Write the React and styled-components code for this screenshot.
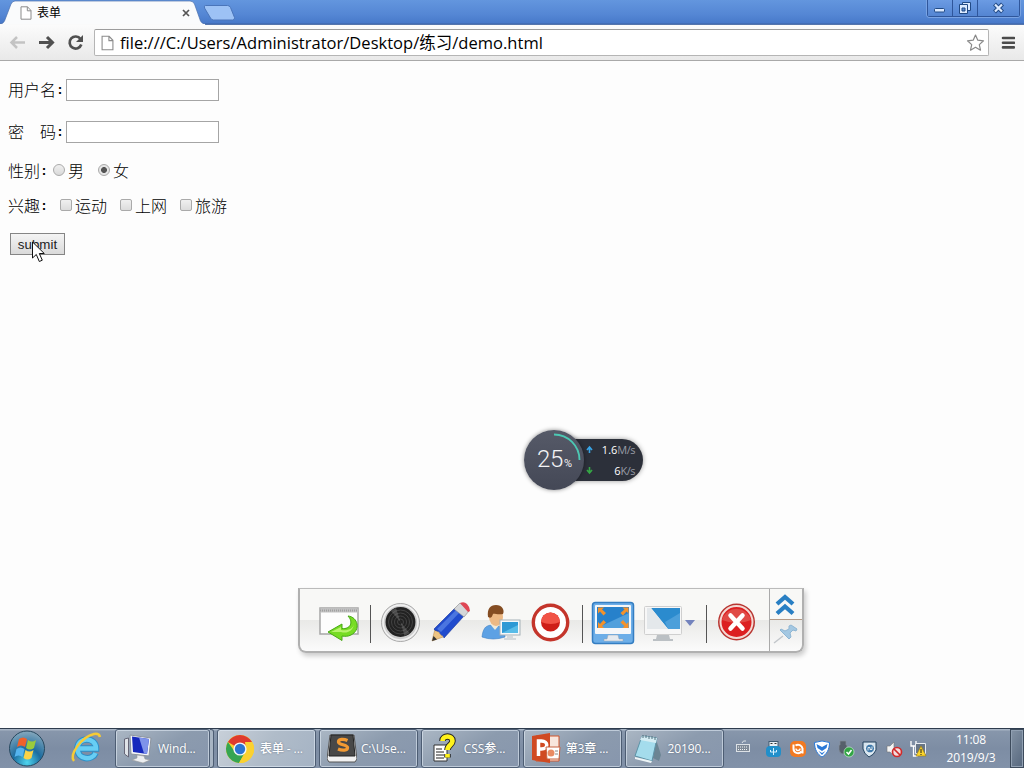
import React from "react";
import styled, { createGlobalStyle } from "styled-components";

const Global = createGlobalStyle`
  html, body { margin: 0; padding: 0; overflow: hidden; background: #fdfdfd; }
  * { box-sizing: border-box; }
`;

const ui = `"Open Sans", "Noto Sans CJK SC", sans-serif`;

const Desktop = styled.div`
  position: relative;
  width: 1024px;
  height: 768px;
  display: flex;
  flex-direction: column;
  overflow: hidden;
  background: #fdfdfd;
  font-family: ${ui};
  color: #000;
`;

/* drawing whose view box starts at (x, y) */
const Svg = styled.svg`
  display: block;
  flex: none;
  margin-left: ${(p) => p.$ml || 0}px;
`;
const Art = ({ x, y, w, h, ml, children }) => (
  <Svg $ml={ml} width={w} height={h} viewBox={`${x} ${y} ${w} ${h}`} fill="none">
    {children}
  </Svg>
);

/* ---------- browser frame ---------- */
const TitleBar = styled.header`
  height: 25px;
  flex: none;
  display: flex;
  background: linear-gradient(#6396de, #5486d4 60%, #4879c9 23px, #3c62a4 24px, #6d87b4 25px);
`;
const Tab = styled.div`
  position: relative;
  width: 206px;
  height: 25px;
  display: flex;
  align-items: center;
  padding-left: 20px;
`;
const TabShape = styled.svg`
  position: absolute;
  left: 0;
  top: 0;
`;
const TabTitle = styled.span`
  position: relative;
  width: 141px;
  margin-left: 5px;
  font-size: 12px;
  line-height: 24px;
`;
const Over = styled.span`
  position: relative;
  display: flex;
`;
const WindowButtons = styled.div`
  display: flex;
  width: 93px;
  height: 17px;
  margin-left: auto;
  margin-right: 4px;
  border: 1px solid #2f569b;
  border-top: 0;
  border-radius: 0 0 3px 3px;
  box-shadow: 0 0 0 1px #79a3e3;
`;
const WinBtn = styled.div`
  width: ${(p) => p.$w}px;
  display: flex;
  justify-content: center;
  background: linear-gradient(#6b9be3, #5485d2);
  & + & { border-left: 1px solid #2f569b; }
`;
const NavBar = styled.nav`
  height: 36px;
  flex: none;
  display: flex;
  align-items: center;
  padding-left: 8px;
  background: linear-gradient(#fbfbfb, #e9e9e9);
  border-bottom: 1px solid #a9a9a9;
`;
const Address = styled.div`
  width: 895px;
  height: 27px;
  margin-left: 9px;
  display: flex;
  align-items: center;
  padding-left: 6px;
  background: #fff;
  border: 1px solid #b5b5b5;
  border-top-color: #9c9c9c;
  border-radius: 2px;
`;
const Url = styled.span`
  width: 846px;
  margin-left: 6px;
  padding-bottom: 1px;
  font-size: 16.5px;
  letter-spacing: 0.02px;
  white-space: nowrap;
  line-height: 23px;
`;

/* ---------- form page ---------- */
const Page = styled.main`
  flex: 1;
  padding: 18px 8px 0;
  font-family: "Noto Sans CJK SC", sans-serif;
  font-size: 16px;
  font-weight: 300;
  line-height: 20px;
`;
const Row = styled.div`
  display: flex;
  align-items: center;
  height: 22px;
  margin-bottom: ${(p) => p.$gap}px;
  white-space: nowrap;
`;
const Label = styled.span`
  height: 22px;
`;
const Colon = styled.span`
  width: ${(p) => p.$w || 8}px;
  font: 700 13.33px "Liberation Mono", monospace;
`;
const Input = styled.input`
  width: 153px;
  height: 22px;
  margin: 0 0 0 2px;
  padding: 1px 3px;
  border: 1px solid #a5a5a5;
  border-radius: 0;
  background: #fff;
  outline: none;
`;
const Choice = styled.label`
  display: flex;
  align-items: center;
  width: ${(p) => p.$w}px;
`;
const Box = styled.i`
  width: 12px;
  height: 12px;
  margin: -2px 3px 0 0;
  border: 1px solid #aaa;
  border-radius: 2px;
  background: linear-gradient(#f0f0f0, #dcdcdc);
`;
const Radio = styled(Box)`
  border-radius: 50%;
  background: ${(p) =>
    p.$on ? "radial-gradient(circle, #555 0 2.6px, #e6e6e6 3.3px)" : "linear-gradient(#f0f0f0, #d9d9d9)"};
`;
const Submit = styled.button`
  display: block;
  width: 55px;
  height: 22px;
  margin: 0 0 0 2px;
  padding: 0;
  border: 1px solid #858585;
  border-radius: 0;
  background: linear-gradient(#f4f4f4, #dadada);
  font: 13.33px "Liberation Sans", sans-serif;
  color: #222;
`;
const Pointer = styled.div`
  position: absolute;
  left: 31px;
  top: 241px;
`;

/* ---------- network monitor ---------- */
const Monitor = styled.div`
  position: absolute;
  left: 524px;
  top: 430px;
  display: flex;
  align-items: center;
  height: 60px;
`;
const Dial = styled.div`
  position: relative;
  z-index: 1;
  width: 60px;
  height: 60px;
  border-radius: 50%;
  background: linear-gradient(#565a68, #444856);
  box-shadow: 0 0 4px rgba(0, 0, 0, 0.45);
  color: #f4f4f6;
  display: flex;
  justify-content: center;
  align-items: baseline;
  line-height: 59px;
  padding-left: 1px;
`;
const DialValue = styled.span`
  font: 300 24px/59px Roboto, sans-serif;
  letter-spacing: -0.4px;
`;
const DialUnit = styled.span`
  margin-left: 1px;
  font: 400 11px Roboto, sans-serif;
`;
const DialArc = styled.svg`
  position: absolute;
  left: 0;
  top: 0;
`;
const Speeds = styled.div`
  width: 79px;
  height: 42px;
  margin-left: -20px;
  padding: 0 8px 0 22px;
  border-radius: 0 21px 21px 0;
  background: #2c303a;
  box-shadow: 0 0 5px rgba(0, 0, 0, 0.4);
`;
const Speed = styled.div`
  display: flex;
  align-items: center;
  height: 21px;
  font-size: 11px;
  color: #fff;
`;
const Amount = styled.span`
  margin-left: auto;
`;
const Unit = styled.span`
  color: #989ca6;
  letter-spacing: -0.5px;
`;

/* ---------- recorder bar ---------- */
const Recorder = styled.div`
  position: absolute;
  left: 298px;
  top: 588px;
  width: 506px;
  height: 65px;
  display: flex;
  border: 2px solid #b0b0b0;
  border-top: 1px solid #bbb;
  border-radius: 0 0 8px 8px;
  background: linear-gradient(#f8f8f6 0 31px, #e9e9e7 31px, #fbfbfb 100%);
  box-shadow: 2px 3px 5px rgba(0, 0, 0, 0.2);
`;
const Tools = styled.div`
  flex: 1;
  display: flex;
  padding: 12px 0 0 18px;
`;
const Separator = styled.i`
  width: 1px;
  height: 38px;
  margin: 4px 0 0 ${(p) => p.$ml}px;
  background: #555;
`;
const Side = styled.div`
  width: 33px;
  border-left: 1px solid #aaa;
`;
const SideBtn = styled.div`
  height: 30px;
  display: flex;
  justify-content: center;
  & + & { border-top: 1px solid #b49a86; }
`;

/* ---------- taskbar ---------- */
const Taskbar = styled.footer`
  height: 40px;
  flex: none;
  display: flex;
  align-items: stretch;
  border-top: 1px solid #2e3c4e;
  background: linear-gradient(#a7b4c4 0 1px, #8796ab 2px, #7d8da4 50%, #8292a9);
  color: #fff;
`;
const TaskButton = styled.div`
  position: relative;
  width: ${(p) => p.$w || 99}px;
  margin: 0 ${(p) => p.$mr ?? 2.9}px 0 0;
  padding-left: 7px;
  display: flex;
  align-items: center;
  border: 1px solid #4d5d73;
  border-radius: 3px;
  box-shadow: inset 0 0 0 1px rgba(225, 235, 245, 0.6);
  background: ${(p) =>
    p.$active ? "linear-gradient(120deg, #c8d0d9, #b0bcc9 50%, #a5b3c4)" : "linear-gradient(150deg, #abb7c4, #8c9bae 50%, #8796ad)"};
`;
const StackEdge = styled.i`
  width: 4px;
  margin-right: 3px;
  border: 1px solid #4d5d73;
  border-left: 0;
  border-radius: 0 3px 3px 0;
  background: #a8b5c4;
`;
const TaskLabel = styled.span`
  margin-left: ${(p) => p.$ml || 4}px;
  padding-bottom: 1px;
  font-size: 12px;
  font-weight: 500;
  letter-spacing: -0.1px;
  white-space: nowrap;
  text-shadow: 0 0 2px rgba(40, 55, 80, 0.5);
`;
const Tray = styled.div`
  display: flex;
  align-items: center;
  margin-left: auto;
`;
const Clock = styled.div`
  width: 76px;
  margin-left: 4px;
  padding-right: 2px;
  font-size: 12px;
  line-height: 18px;
  text-align: center;
  letter-spacing: -0.1px;
`;
const ShowDesktop = styled.i`
  align-self: stretch;
  width: 14px;
  border: 1px solid #3d4b5c;
  box-shadow: inset 0 0 0 1px #91a0b2;
  background: linear-gradient(120deg, #8493a5, #56677d);
`;

const PageIcon = ({ w, h }) => (
  <svg width={w} height={h} viewBox="0 0 12 14" fill="none">
    <path d="M1 .8h6.5L11 4.500v8.700H1zM7.300.8v4H11" fill="#fff" stroke="#8b8b8b" />
  </svg>
);

const tasks = [
  { label: "Wind...", w: 95, mr: 0, stack: true, ml: 5, icon: (
    <Art x={123} y={732} w={30} h={32}>
      <path d="M124.500 738l4-1v19l-4-3z" fill="#dfe3e8" stroke="#667" />
      <path d="M130 734l21 3-2 18-18-2z" fill="#f3f5f7" stroke="#8c949f" />
      <path d="M132 735.500l17 2.500-2 15-14-2z" fill="#1528bd" />
      <path d="M139 736.500l10 1.500-2 15-3-.5z" fill="#7e93ea" />
      <path d="M137 754l7 1 1 3 5 1-7 3-11-3 5-2z" fill="#eceef0" stroke="#999" strokeWidth=".6" />
    </Art>) },
  { label: "表单 - ...", active: true, ml: 5, icon: (
    <Art x={225} y={733} w={30} h={30}>
      <circle cx="240" cy="748" r="14" fill="#fbd130" />
      <path d="M240 748L227.900 741A14 14 0 0 1 252.100 741z" fill="#df3a2e" />
      <path d="M227.900 741A14 14 0 0 0 239 762l6.500-11.500L240 748l-5 3z" fill="#35a552" />
      <path d="M252.100 741A14 14 0 0 1 239 762l7-12-1-9z" fill="#fbd130" />
      <circle cx="240" cy="748" r="6.600" fill="#f4f6f8" />
      <circle cx="240" cy="748" r="5.200" fill="#2c75d2" />
    </Art>) },
  { label: "C:\\Use...", icon: (
    <Art x={327} y={731} w={30} h={32}>
      <path d="M330 733h24l3 24-2 3h-26l-2-3z" fill="#f2f2f2" stroke="#555" />
      <path d="M331 733h22l2 21h-26z" fill="#484848" stroke="#222" />
      <path d="M347.500 738.500c-4-1.800-9-1.500-9 1.500s9 2.500 9 5.500-5 3.500-9.500 1.500" stroke="#f29a33" strokeWidth="3.300" />
    </Art>) },
  { label: "CSS参...", ml: 5, icon: (
    <Art x={429} y={732} w={30} h={32}>
      <path d="M434 744h13v16h-13z" fill="#fff" stroke="#333" />
      <path d="M436 748h6m-6 3h8m-8 3h8m-8 3h8" stroke="#222" />
      <path d="M442.500 740c0-6 10-6 10 0 0 4-5 4-5 9m0 4v3.500" stroke="#222" strokeWidth="6.500" />
      <path d="M442.500 740c0-6 10-6 10 0 0 4-5 4-5 9m0 4v3.500" stroke="#fff21c" strokeWidth="4.700" />
    </Art>) },
  { label: "第3章 ...", icon: (
    <Art x={530} y={731} w={31} h={33}>
      <path d="M535 735h23v25h-23z" fill="#f8e6dd" stroke="#d2572c" />
      <path d="M531 735l18-3v30l-18-3z" fill="#d04a22" />
      <path d="M537.500 755v-15h3c7 0 7 8 0 8h-2.500" stroke="#fff" strokeWidth="3.500" />
      <path d="M545 746h14l-1 12h-12z" fill="#fff" stroke="#c76341" />
      <circle cx="550" cy="752" r="3.500" fill="#e98b63" />
      <path d="M554 750h3m-3 3h3" stroke="#888" />
    </Art>) },
  { label: "20190...", icon: (
    <Art x={631} y={732} w={31} h={32}>
      <path d="M653 735l6 19-2 6-6-3z" fill="#6b8593" />
      <path d="M640 735l15 2-5 23-17-5z" fill="#a4dcec" stroke="#5d93a7" />
      <path d="M640 735l15 2-1 5-16-3z" fill="#d5edf3" />
      <path d="M641 734v3m3-3v3m3-2v3m3-3v3m3-2v3" stroke="#53717e" />
      <path d="M633 756l17 4-1 2-16-4z" fill="#edf5f7" />
    </Art>) },
];

const Screen = () => (
  <>
    <rect x="597" y="607" width="32" height="21" fill="#2781cb" />
    <path d="M597 628l32-15v15z" fill="#51a0dc" />
    {[[602, 611.5, 0], [624.5, 611.5, 90], [624.5, 624, 180], [602, 624, 270]].map(([x, y, r]) => (
      <path key={r} transform={`translate(${x} ${y}) rotate(${r})`} d="M-4-4h6l-2 2 4 3.500-2.500 2.500-3.500-4-2 2z" fill="#f3922b" />
    ))}
  </>
);

export default function App() {
  return (
    <Desktop>
      <Global />
      <TitleBar>
        <Tab>
          <TabShape width="240" height="25" viewBox="0 0 240 25">
            <path d="M0 25V24q3 0 4.500-3L11 4q1.500-3 4-3h175q3 0 4.500 3l6 17q1.500 3 5 3v1z" fill="#fafbfc" stroke="#4b70ad" strokeWidth=".7" />
            <path d="M0 24.500h205" stroke="#fafafa" />
            <path d="M205.500 5.500h22q2 0 3 2l4 10q.5 2.500-2 2.500h-19q-2 0-3-2l-6-10q-.7-2.500 1-2.500z" fill="#9dc2f5" stroke="#4a75ba" />
          </TabShape>
          <Over><PageIcon w={12} h={14} /></Over>
          <TabTitle>表单</TabTitle>
          <Over>
            <Art x={182} y={9} w={8} h={8} ml={4}><path d="M183 10l6 6m0-6l-6 6" stroke="#555" strokeWidth="1.700" /></Art>
          </Over>
        </Tab>
        <WindowButtons>
          <WinBtn $w={24}><Art x={933} y={0} w={14} h={16}><rect x="934.500" y="8.500" width="10" height="3.500" rx="1" fill="#dceaff" stroke="#214a85" /></Art></WinBtn>
          <WinBtn $w={25}>
            <Art x={957} y={0} w={15} h={16}>
              <path d="M961.500 2.500h8v8h-8z" fill="#dceaff" stroke="#214a85" />
              <path d="M958.500 4.500h8v9h-8z" fill="#dceaff" stroke="#214a85" />
              <path d="M961 8h3v3h-3z" fill="#5d8bd0" stroke="#214a85" />
            </Art>
          </WinBtn>
          <WinBtn $w={42}>
            <Art x={992} y={0} w={14} h={16}>
              <path d="M994.500 4l8 8m0-8l-8 8" stroke="#214a85" strokeWidth="4.200" />
              <path d="M995 4.500l7 7m0-7l-7 7" stroke="#dceaff" strokeWidth="2.200" />
            </Art>
          </WinBtn>
        </WindowButtons>
      </TitleBar>

      <NavBar>
        <Art x={8} y={33} w={77} h={20}>
          <path d="M25 42.500H12M17 37l-5.500 5.500L17 48" stroke="#c3c3c3" strokeWidth="2.500" />
          <path d="M39 42.500h13M47 37l5.500 5.500L47 48" stroke="#505050" strokeWidth="3" />
          <path d="M80.500 39a6 6 0 1 0 .8 5.500" stroke="#505050" strokeWidth="2.700" />
          <path d="M83 35v7h-7z" fill="#505050" />
        </Art>
        <Address>
          <PageIcon w={13} h={16} />
          <Url>file:///C:/Users/Administrator/Desktop/练习/demo.html</Url>
          <Art x={966} y={33} w={20} h={20}>
            <path d="M975.500 35l2.300 5.200 5.700.6-4.200 3.800 1.200 5.600-5-2.900-5 2.900 1.200-5.600-4.200-3.800 5.700-.6z" fill="#fff" stroke="#888" strokeWidth="1.200" strokeLinejoin="round" />
          </Art>
        </Address>
        <Art x={1001} y={35} w={14} h={15} ml={12}>
          <path d="M1003 38h11m-11 4.700h11m-11 4.700h11" stroke="#4b4b4b" strokeWidth="2.600" strokeLinecap="round" />
        </Art>
      </NavBar>

      <Page>
        <Row $gap={20}><Label>用户名</Label><Colon>:</Colon><Input type="text" /></Row>
        <Row $gap={17}><Label>密　码</Label><Colon>:</Colon><Input type="password" /></Row>
        <Row $gap={13}>
          <Label>性别</Label><Colon $w={13}>:</Colon>
          <Choice $w={45}><Radio /><Label>男</Label></Choice>
          <Choice $w={40}><Radio $on /><Label>女</Label></Choice>
        </Row>
        <Row $gap={16}>
          <Label>兴趣</Label><Colon $w={20}>:</Colon>
          <Choice $w={60}><Box /><Label>运动</Label></Choice>
          <Choice $w={60}><Box /><Label>上网</Label></Choice>
          <Choice $w={60}><Box /><Label>旅游</Label></Choice>
        </Row>
        <Submit>submit</Submit>
      </Page>
      <Pointer>
        <svg width="14" height="22" viewBox="0 0 14 22">
          <path d="M1.500 1v16l3.800-3.500 3 7 3-1.300-3-6.700h5z" fill="#fff" stroke="#111" />
        </svg>
      </Pointer>

      <Monitor>
        <Dial>
          <DialArc width="60" height="60" viewBox="0 0 60 60" fill="none">
            <path d="M30 4.500A25.500 25.500 0 0 1 55.500 30" stroke="#4cc9b4" strokeWidth="1.800" />
          </DialArc>
          <DialValue>25</DialValue><DialUnit>%</DialUnit>
        </Dial>
        <Speeds>
          <Speed>
            <Art x={586} y={445} w={8} h={9}><path d="M589.500 453v-6m-2.500 3l2.500-3 2.500 3" stroke="#38a6e8" strokeWidth="1.600" /></Art>
            <Amount>1.6</Amount><Unit>M/s</Unit>
          </Speed>
          <Speed>
            <Art x={586} y={466} w={8} h={9}><path d="M589.500 467v6m-2.500-3l2.500 3 2.500-3" stroke="#35a845" strokeWidth="1.600" /></Art>
            <Amount>6</Amount><Unit>K/s</Unit>
          </Speed>
        </Speeds>
      </Monitor>

      <Recorder>
        <Tools>
          <Art x={318} y={601} w={42} h={44}>
            <path d="M320 608h38v26h-38z" fill="#fdfdfd" stroke="#a6a6a6" strokeWidth="1.500" />
            <path d="M320 610.500h38" stroke="#c2c2c2" strokeWidth="4" />
            <path d="M320 610.500h38" stroke="#a0a0a0" strokeWidth="2" strokeDasharray="1 1" />
            <path d="M348 616c10 1 13 14 3 19-3 1.500-6 1.500-9 1v4.500l-14-8.500 14-8v4.500c8 1 12-6 6-12.500z" fill="#77dc24" stroke="#48a916" />
            <path d="M331 632l10-5v3c7 1 12-1 13-6-1 7-7 10-13 8z" fill="#b8f36e" />
          </Art>
          <Separator $ml={10} />
          <Art x={380} y={601} w={40} h={44} ml={9}>
            <circle cx="400.500" cy="622.500" r="19" fill="#cfcfcf" stroke="#aaa" />
            <circle cx="400.500" cy="622.500" r="17.500" stroke="#f2f2f2" strokeWidth="1.500" />
            <circle cx="400.500" cy="622" r="15" fill="#222" />
            {[12, 9, 6, 3].map((r) => <circle key={r} cx="400.500" cy="622" r={r} stroke="#444" strokeWidth="1" />)}
            <path d="M400.500 622L391 611l5-3zM400.500 622l9 11-5 3z" fill="#888" opacity=".4" />
          </Art>
          <Art x={431} y={601} w={40} h={44} ml={11}>
            <path d="M432 641l3-12 8 8z" fill="#edc483" stroke="#b9905a" strokeWidth=".6" />
            <path d="M432 641l1.500-5 3.500 3.500z" fill="#333" />
            <path d="M434 629l21-21 9 8-20 22c-1-4-3-2-4-5-1-3-5-1-6-4z" fill="#204bcd" stroke="#17349a" strokeWidth=".6" />
            <path d="M437 629l20-20 3 3-19 20z" fill="#4a75e0" />
            <path d="M454 609l6-6 9 8-5 6z" fill="#d5d7d9" stroke="#888" strokeWidth=".6" />
            <path d="M460 603q4-2 7 1t3 7l-2 1z" fill="#df4654" />
          </Art>
          <Art x={481} y={601} w={40} h={44} ml={10}>
            <path d="M482 637c1-10 5-12 11-12s12 3 12 12q-12 4-23 0z" fill="#5da1e4" stroke="#3d80c4" strokeWidth=".6" />
            <path d="M490 624l5 6 5-6z" fill="#f0ead9" />
            <ellipse cx="496" cy="617" rx="7" ry="9" fill="#edb984" />
            <path d="M488 617c-1-8 2-12 8-12s9 5 7 9c-6 1-9-1-10 0-1 2-1 5-5 3z" fill="#844d22" />
            <rect x="500" y="620" width="20" height="15" fill="#f5f8fa" stroke="#a5b1b8" />
            <rect x="502" y="622" width="16" height="11" fill="#2d99d5" />
            <path d="M502 633l16-8v8z" fill="#58bce8" />
            <path d="M507 636h6v2h3v2h-12v-2h3z" fill="#d4d9dc" />
          </Art>
          <Art x={531} y={601} w={40} h={44} ml={10}>
            <circle cx="550.500" cy="622.500" r="17.200" fill="#fff" stroke="#c4352b" strokeWidth="3.400" />
            <circle cx="550.500" cy="622" r="9.500" fill="#ce1e18" />
            <path d="M541 622a9.500 9.500 0 0 1 19 0q-9 4-19 0z" fill="#f15346" />
          </Art>
          <Separator $ml={11} />
          <Art x={591} y={601} w={44} h={44} ml={8}>
            <rect x="592.500" y="602.500" width="41" height="41" rx="3" fill="#6caee8" stroke="#347ec2" strokeWidth="1.500" />
            <rect x="595" y="605" width="36" height="29" rx="1" fill="#f5f7f9" />
            <Screen />
            <path d="M608 635h10l1 4h4v2h-19v-2h3z" fill="#e5eaef" stroke="#94a2b0" strokeWidth=".5" />
          </Art>
          <Art x={643} y={601} w={54} h={44} ml={8}>
            <rect x="644.500" y="606.500" width="37" height="28" rx="1" fill="#f7f7f7" stroke="#cfcfcf" />
            <path d="M651 608h29v21h-12z" fill="#2b8bce" />
            <path d="M680 613v16h-12l-3-7z" fill="#4c9fda" />
            <path d="M647 608h4l17 21h-21z" fill="#e4e8eb" />
            <path d="M657 635h12l1 4h3v2h-20v-2h3z" fill="#bbc0c4" />
            <path d="M685 620h10l-5 6z" fill="#7383bd" />
          </Art>
          <Separator $ml={9} />
          <Art x={717} y={601} w={40} h={44} ml={10}>
            <circle cx="736.500" cy="622" r="18.500" fill="#b83530" />
            <circle cx="736.500" cy="622" r="16" fill="#dc1f21" stroke="#f4d9d4" strokeWidth="2" />
            <path d="M722 620a15 15 0 0 1 29 0q-14 6-29 0z" fill="#e04a46" />
            <path d="M730.500 615.500l12 13m0-13l-12 13" stroke="#fff" strokeWidth="4.500" strokeLinecap="round" />
          </Art>
        </Tools>
        <Side>
          <SideBtn>
            <Art x={776} y={589} w={22} h={30}><path d="M778 604l8-7 8 7m-16 9.500l8-7 8 7" stroke="#297fc3" strokeWidth="4.300" /></Art>
          </SideBtn>
          <SideBtn>
            <Art x={773} y={621} w={26} h={28}>
              <path d="M774 644l9-7" stroke="#c2c6ca" strokeWidth="1.500" />
              <path d="M780 631l9 9 2-2-1-4 3-3 3 1 1-2-6-4-2 1v3l-4 2-4-2z" fill="#a4c8e2" stroke="#8fb6d3" />
            </Art>
          </SideBtn>
        </Side>
      </Recorder>

      <Taskbar>
        <Art x={0} y={729} w={115} h={39}>
          <defs>
            <radialGradient id="orb" cx=".5" cy=".9" r=".9">
              <stop offset="0" stopColor="#4fd5ee" /><stop offset=".45" stopColor="#1c6c9f" /><stop offset="1" stopColor="#88a9bd" />
            </radialGradient>
          </defs>
          <circle cx="27" cy="748.500" r="17.500" fill="url(#orb)" stroke="#27485f" />
          <path d="M19 739q4-3 8 0l-2 8q-4-3-8 0z" fill="#ef622b" />
          <path d="M28 740q4 3 8 0l-2 8q-4 3-8 0z" fill="#9bcb3b" />
          <path d="M16.500 749q4-3 8 0l-2 8q-4-3-8 0z" fill="#55b4ee" />
          <path d="M25.500 750q4 3 8 0l-2 8q-4 3-8 0z" fill="#fbd347" />
          <path d="M78 748.500h18c0-12-18.500-12-18.500 0 0 12 15 12 18 4.500" stroke="#2d8fc7" strokeWidth="6.500" />
          <path d="M78 748.500h18c0-12-18.500-12-18.500 0 0 12 15 12 18 4.500" stroke="#67cef4" strokeWidth="4.500" />
          <path d="M74 761c-5-6 7-24 20-27q5-1 6 3" stroke="#f6cb36" strokeWidth="2.500" />
        </Art>
        {tasks.map((t) => (
          <React.Fragment key={t.label}>
            <TaskButton $w={t.w} $mr={t.mr} $active={t.active}>
              {t.icon}
              <TaskLabel $ml={t.ml}>{t.label}</TaskLabel>
            </TaskButton>
            {t.stack && <StackEdge />}
          </React.Fragment>
        ))}
        <Tray>
          <Art x={734} y={738} w={196} h={22}>
            <rect x="736.500" y="744.500" width="13" height="7" fill="#7f8a97" stroke="#dce1e6" />
            <path d="M738 747h10m-10 2.500h10" stroke="#f1f3f5" strokeDasharray="1 1" />
            <path d="M742 743q1-3 4-2" stroke="#dce1e6" />
            <rect x="769" y="741.500" width="9" height="6" fill="#e8eef3" stroke="#405a70" />
            <rect x="766" y="746" width="15" height="11" rx="4" fill="#218fca" />
            <path d="M770.500 743.500h2m2 0h2" stroke="#333" />
            <path d="M773.500 748v7m-3-5v2h6v-2" stroke="#d5f1ff" />
            <rect x="790" y="741" width="16" height="16" rx="5" fill="#f27a22" />
            <path d="M793.500 744.500v4a4.500 4.500 0 0 0 8 3M802.500 753.500v-5a4.500 4.500 0 0 0-7-3" stroke="#fff" strokeWidth="2" />
            <path d="M796 748.500a2 2 0 0 0 4 0" stroke="#fff" strokeWidth="1.400" />
            <path d="M814.500 742.500q7.500-3 15 0c0 7-3 12-7.500 14.500-4.500-2.500-7.500-7.500-7.500-14.500z" fill="#fff" stroke="#2a79d8" />
            <path d="M816.500 744l5.500 3 5.500-3-1 4-4.500 3-4.500-3z" fill="#2a79d8" />
            <path d="M818.500 751l3.500 2 3.500-2-3.500 4z" fill="#2a79d8" />
            <path d="M840 741h6v4h1v5q-1 4-4 4t-4-4v-5h1z" fill="#56606b" stroke="#858e99" strokeWidth=".7" />
            <circle cx="849" cy="752" r="5" fill="#31a444" stroke="#dcf3df" strokeWidth=".6" /><path d="M846.500 752l2 2 3-4" stroke="#fff" strokeWidth="1.500" />
            <path d="M863 742h13v8q-2 5-7 7-5-3-6-8z" fill="#d7e5ef" stroke="#24435f" />
            <circle cx="870" cy="748.500" r="4.500" fill="#407aab" stroke="#fff" /><path d="M868 750.500v-3h2v2h2v-3" stroke="#fff" strokeWidth=".8" />
            <path d="M887 746h3l4-4v14l-4-4h-3z" fill="#f4f4f4" stroke="#777" strokeWidth=".6" />
            <circle cx="897" cy="752" r="4.500" fill="#f5dddd" stroke="#d12b2b" strokeWidth="1.700" /><path d="M894 749l6 6" stroke="#d12b2b" strokeWidth="1.700" />
            <path d="M911 741v5h5v-5m-2.500 5v10h4" stroke="#fff" strokeWidth="1.300" />
            <path d="M915.500 743.500h10v10h-10z" fill="#687687" stroke="#e9edf2" />
            <path d="M921 746l5 10h-10z" fill="#fbd52b" stroke="#9c7a0b" strokeWidth=".6" /><path d="M921 749v4m0 1v1" stroke="#222" />
          </Art>
          <Clock>11:08<br />2019/9/3</Clock>
          <ShowDesktop />
        </Tray>
      </Taskbar>
    </Desktop>
  );
}
